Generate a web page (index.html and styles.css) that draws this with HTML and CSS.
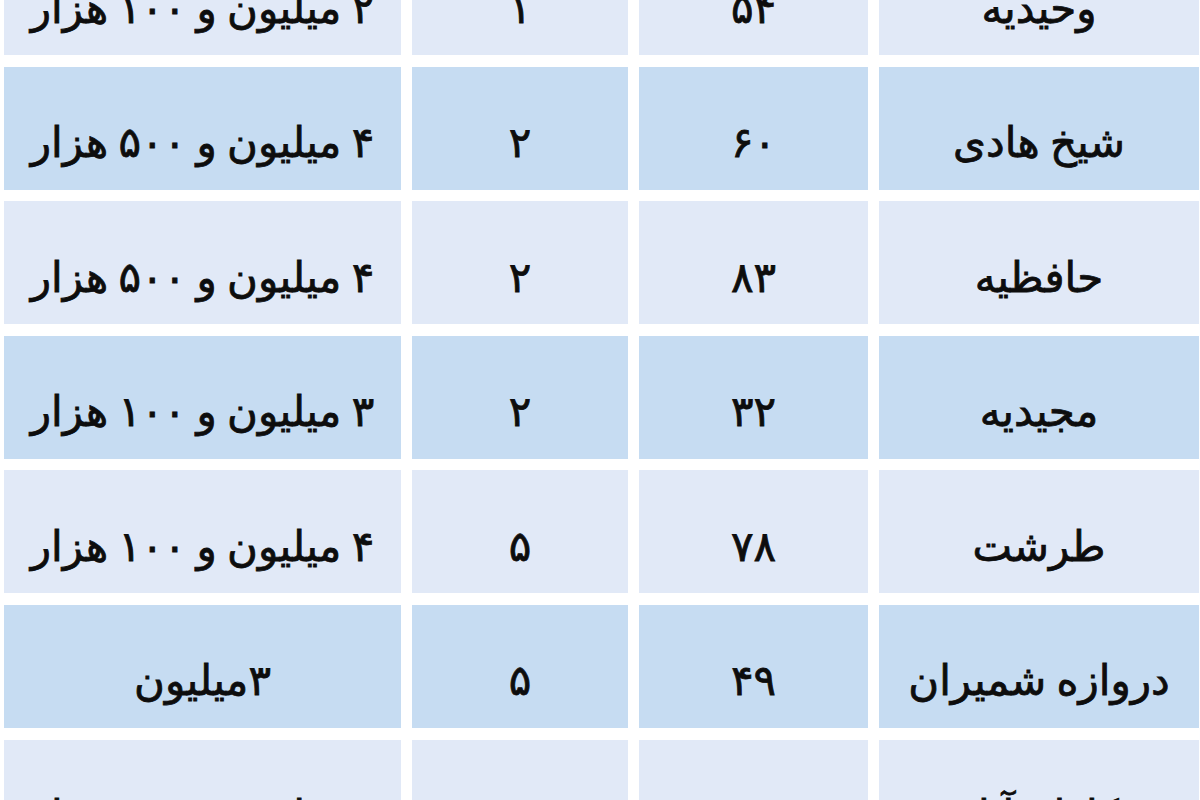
FILE: index.html
```html
<!DOCTYPE html>
<html lang="fa">
<head>
<meta charset="utf-8">
<title>جدول</title>
<link rel="stylesheet" href="styles.css">
</head>
<body>
<div class="sheet">
  <div class="table">
    <div class="cell light">۲ میلیون و ۱۰۰ هزار</div>
    <div class="cell light">۱</div>
    <div class="cell light">۵۴</div>
    <div class="cell light">وحیدیه</div>

    <div class="cell dark">۴ میلیون و ۵۰۰ هزار</div>
    <div class="cell dark">۲</div>
    <div class="cell dark">۶۰</div>
    <div class="cell dark">شیخ هادی</div>

    <div class="cell light">۴ میلیون و ۵۰۰ هزار</div>
    <div class="cell light">۲</div>
    <div class="cell light">۸۳</div>
    <div class="cell light">حافظیه</div>

    <div class="cell dark">۳ میلیون و ۱۰۰ هزار</div>
    <div class="cell dark">۲</div>
    <div class="cell dark">۳۲</div>
    <div class="cell dark">مجیدیه</div>

    <div class="cell light">۴ میلیون و ۱۰۰ هزار</div>
    <div class="cell light">۵</div>
    <div class="cell light">۷۸</div>
    <div class="cell light">طرشت</div>

    <div class="cell dark">۳میلیون</div>
    <div class="cell dark">۵</div>
    <div class="cell dark">۴۹</div>
    <div class="cell dark">دروازه شمیران</div>

    <div class="cell light">۳ میلیون و ۴۰۰ هزار</div>
    <div class="cell light">۶</div>
    <div class="cell light">۵۱</div>
    <div class="cell light">کاظم آباد</div>
  </div>
</div>
</body>
</html>
```

FILE: styles.css
```css
html, body {
  margin: 0;
  padding: 0;
  background: #ffffff;
}

body {
  width: 1200px;
  height: 800px;
  overflow: hidden;
}

.sheet {
  padding-left: 4px;
}

.table {
  display: grid;
  grid-template-columns: 397px 216px 229px 320px;
  grid-auto-rows: 123px;
  column-gap: 11px;
  row-gap: 11.6px;
  margin-top: -68px;
}

.cell {
  display: flex;
  align-items: center;
  justify-content: center;
  padding-top: 30px;
  box-sizing: border-box;
  font-family: "DejaVu Sans", sans-serif;
  font-size: 42px;
  line-height: 1;
  word-spacing: -3px;
  -webkit-text-stroke: 0.8px #0d0d0d;
  color: #0d0d0d;
  direction: rtl;
  white-space: nowrap;
}

.light {
  background: #e1e9f7;
}

.dark {
  background: #c6dcf2;
}
```
